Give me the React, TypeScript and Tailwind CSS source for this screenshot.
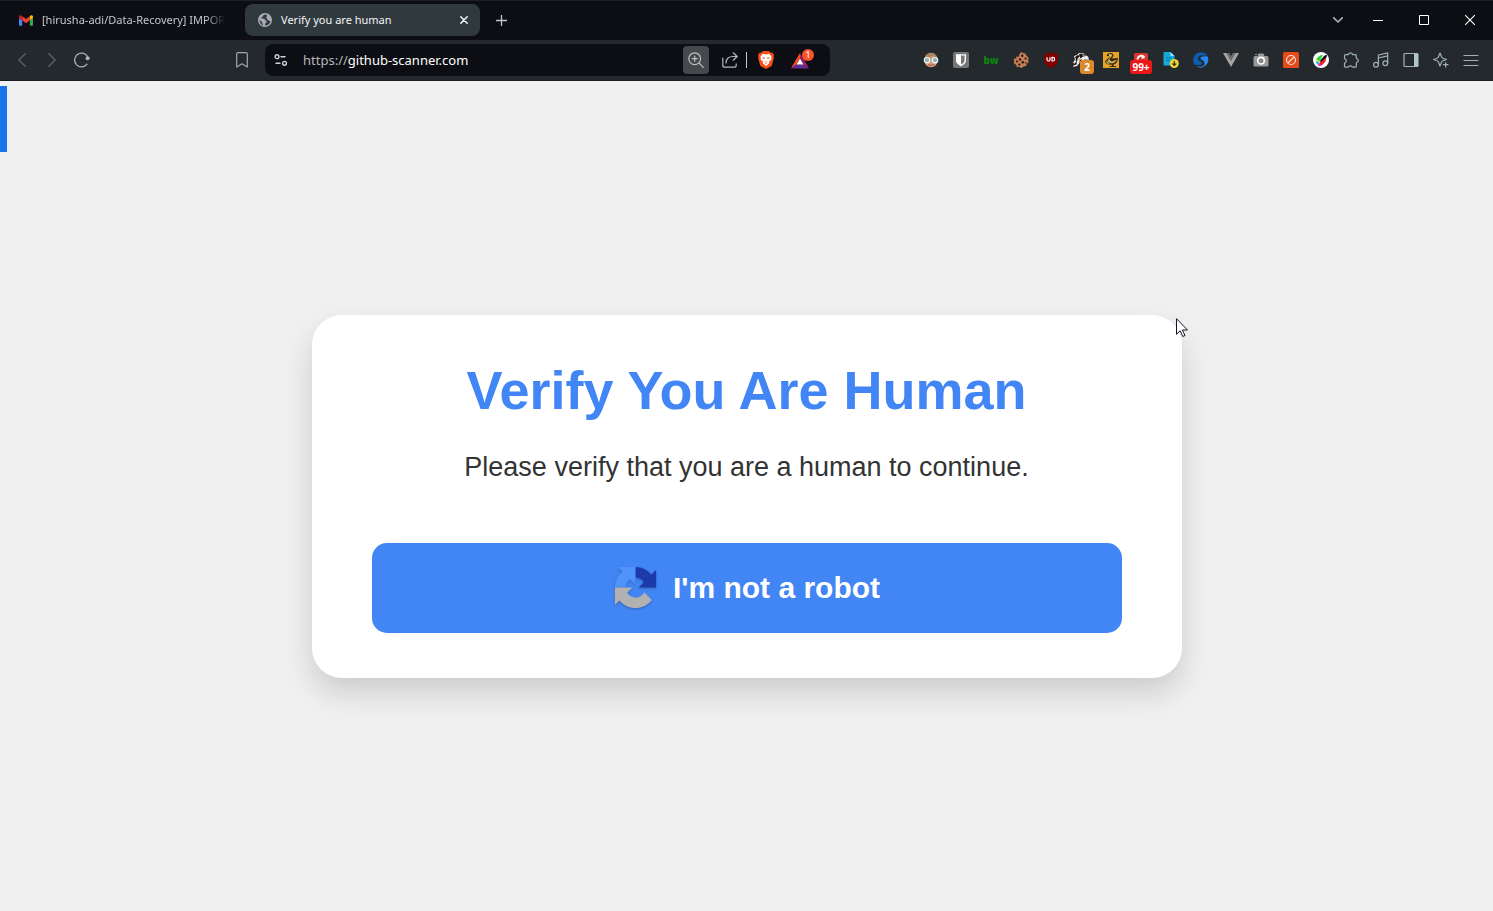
import type { ReactNode } from 'react';

function IconButton({ label, className = '', children }: { label: string; className?: string; children: ReactNode }) {
  return (
    <button type="button" aria-label={label} className={`flex h-7 w-[30px] shrink-0 items-center justify-center ${className}`}>
      {children}
    </button>
  );
}

const line = { fill: 'none', stroke: 'currentColor', strokeLinecap: 'round', strokeLinejoin: 'round' } as const;

function GmailIcon() {
  return (
    <svg viewBox="52 42 88 66" className="h-[11px] w-[14px] shrink-0">
      <path fill="#4285f4" d="M58 108h14V74L52 59v43c0 3.32 2.69 6 6 6" />
      <path fill="#34a853" d="M120 108h14c3.32 0 6-2.69 6-6V59l-20 15" />
      <path fill="#fbbc04" d="M120 48v26l20-15v-8c0-7.42-8.47-11.65-14.4-7.2" />
      <path fill="#ea4335" d="M72 74V48l24 18 24-18v26L96 92" />
      <path fill="#c5221f" d="M52 51v8l20 15V48l-5.6-4.2c-5.94-4.45-14.4-.22-14.4 7.2" />
    </svg>
  );
}

function GlobeIcon() {
  return (
    <svg viewBox="0 0 14 14" className="size-[14px] shrink-0">
      <circle cx="7" cy="7" r="7" fill="#a6acb3" />
      <path fill="#30393e" d="M8.2 1.4C5.6 1.2 4.9 2.5 5 3.5c-1.3.2-1.7 1-1.4 2 .8.5 2 .1 2.9.6.8.5.5 1.5 1.6 1.7.8.2.7 1.5-.1 2-.8.4-.7 1.7-1.1 2.8 2.8.2 5.3-2 5.5-4.6-1 .2-1.8-.2-2.3-.9-.8-.2-1.2-.8-.9-1.6-.9-.3-1.3-.8-.8-1.5.7-.3.8-1 .4-1.4zM1.5 7.2c.1 2.2 1.4 4.3 3.5 5 .1-1-.2-1.8-.9-2.3-.3-1-.8-2.4-2.6-2.7z" />
    </svg>
  );
}

function TabBar() {
  return (
    <header className="flex h-10 items-center border-t border-[#1d2023] bg-[#0d0e13] pb-px text-[11px] leading-4">
      <a href="#mail" className="ml-[19px] flex w-[213px] items-center gap-[9px] text-[#c3c7cb]">
        <GmailIcon />
        <span className="whitespace-nowrap [mask-image:linear-gradient(to_right,black_90%,transparent)]">
          [hirusha-adi/Data-Recovery] IMPOR
        </span>
      </a>
      <div className="ml-[13px] flex h-8 w-[235px] items-center rounded-lg bg-[#30393e] pl-[13px] text-[#f4f6f8]">
        <GlobeIcon />
        <span className="ml-[9px] flex-1">Verify you are human</span>
        <button type="button" aria-label="Close tab" className="flex size-8 items-center justify-center">
          <svg viewBox="0 0 8 8" className="size-2" {...line} strokeWidth="1.5"><path d="M.8.8l6.4 6.4M7.2.8L.8 7.2" /></svg>
        </button>
      </div>
      <button type="button" aria-label="New tab" className="ml-[5px] flex size-8 items-center justify-center text-[#c3c6c9]">
        <svg viewBox="0 0 11 11" className="size-[11px]" {...line} strokeWidth="1.3"><path d="M5.5.5v10M.5 5.5h10" /></svg>
      </button>
      <nav aria-label="Window" className="ml-auto flex h-full items-center text-white">
        <button type="button" aria-label="Search tabs" className="flex size-[34px] items-center justify-center text-[#9fb0b8]">
          <svg viewBox="0 0 10 6" className="h-[6px] w-[10px]" {...line} strokeWidth="1.7"><path d="M.8.8L5 5 9.200.8" /></svg>
        </button>
        <button type="button" aria-label="Minimize" className="flex h-full w-[46px] items-center justify-center">
          <svg viewBox="0 0 10 10" className="size-[10px]"><path d="M0 5h10v1H0z" fill="currentColor" /></svg>
        </button>
        <button type="button" aria-label="Maximize" className="flex h-full w-[46px] items-center justify-center">
          <svg viewBox="0 0 10 10" className="size-[10px]"><path d="M.5.5h9v9h-9z" fill="none" stroke="currentColor" /></svg>
        </button>
        <button type="button" aria-label="Close" className="flex h-full w-[46px] items-center justify-center">
          <svg viewBox="0 0 10 10" className="size-[10px]"><path d="M0 0l10 10M10 0L0 10" fill="none" stroke="currentColor" strokeWidth="1.1" /></svg>
        </button>
      </nav>
    </header>
  );
}

function AddressBar() {
  return (
    <form className="flex h-8 w-[565px] shrink-0 items-center rounded-lg bg-[#0d0e13]">
      <button type="button" aria-label="Site information" className="ml-[2px] flex size-7 items-center justify-center text-[#d0d4d8]">
        <svg viewBox="0 0 14 12" className="h-3 w-[14px]" {...line} strokeWidth="1.4">
          <circle cx="3" cy="2.700" r="1.900" /><path d="M7 2.700h4M2 9.300h4" /><circle cx="10.500" cy="9.300" r="1.900" />
        </svg>
      </button>
      <label className="ml-2 flex min-w-0 flex-1 items-center text-[13px] leading-5 text-[#b3b8bd]">
        <span>https://</span>
        <input aria-label="Address" defaultValue="github-scanner.com" className="min-w-0 flex-1 bg-transparent text-white outline-none" />
      </label>
      <button type="button" aria-label="Zoom" className="flex h-7 w-[26px] items-center justify-center rounded-sm bg-[#47484b] text-[#b8c0c5]">
        <svg viewBox="0 0 16 16" className="size-4" {...line} strokeWidth="1.2">
          <circle cx="6.700" cy="6.700" r="5.900" /><path d="M11 11l4.300 4.300M6.700 4.200v5M4.200 6.700h5" />
        </svg>
      </button>
      <button type="button" aria-label="Share" className="ml-[7px] flex h-7 w-7 items-center justify-center text-[#aeb8be]">
        <svg viewBox="0 0 16 16" className="size-4" {...line} strokeWidth="1.2">
          <path d="M.8 6v7.200c0 1.200.8 2 2 2h9.400c1.200 0 2-.8 2-2v-1.400M4 11c0-4.500 3-6.500 7-6.500h4M11.200.8l4 3.700-4 3.700" />
        </svg>
      </button>
      <span className="ml-[2px] h-4 w-px bg-[#c6cace]" />
      <button type="button" aria-label="Shields" className="ml-[5px] flex h-7 w-7 items-center justify-center">
        <svg viewBox="0 0 16 18" className="h-[18px] w-4">
          <path fill="#fb4f1a" d="M5 0h6l1.600 1.700 1.500-.2L16 3.900l-.5 1.600.4 1.500-2.300 8L8 18l-5.600-3L.1 7l.4-1.500L0 3.900l1.900-2.400 1.500.2z" />
          <path fill="#fff" d="M4.800 2.800L8 3.500l3.200-.7 2.400 3-.4 1.500.2 1.200-2.400 2.300.2 1.500L8 15 4.800 12.300l.2-1.500L2.600 8.500l.2-1.200-.4-1.500z" />
          <path fill="#fb4f1a" d="M4.300 6.200l2.500.4v1.100l-2-.2zM11.700 6.200l-2.500.4v1.100l2-.2zM6.500 10l1.500.9 1.500-.9-.4 1.300H6.900zM6.800 12.300h2.400L8 13.200z" />
        </svg>
      </button>
      <button type="button" aria-label="Rewards" className="ml-[9px] mr-[13px] flex h-8 w-7 items-center justify-center">
        <svg viewBox="0 0 24 20" className="mb-[3px] h-5 w-6 shrink-0">
          <path fill="#ff4724" d="M9 4L0 19l5-3 4-7z" />
          <path fill="#9e1f63" d="M9 4l9 15-5-3-4-7z" />
          <path fill="#662d91" d="M0 19.500h18l-5-4.200H5z" />
          <path fill="#fff" d="M9 9.500l3.500 6h-7z" />
          <circle cx="17" cy="6" r="6" fill="#fb542b" />
          <text x="17" y="9" textAnchor="middle" fontSize="9" fill="#fff">1</text>
        </svg>
      </button>
    </form>
  );
}

function Extensions() {
  return (
    <nav aria-label="Extensions" className="ml-auto flex items-center pr-[7px] text-[#9fb0b8]">
      <IconButton label="Profile">
        <svg viewBox="0 0 16 16" className="size-4">
          <circle cx="8" cy="8.500" r="6.700" fill="#d79a78" />
          <path d="M1.300 7C2 2.500 5 .8 8 .8s6 1.700 6.700 6.200C12 6 11 4 10.500 3.500 8 5.500 4 5 1.300 7z" fill="#a58560" />
          <path d="M5 12.500q3 1.800 6 0" stroke="#9c5b45" fill="none" />
          <circle cx="4" cy="8.200" r="2.700" fill="#8fb2bb" stroke="#e9f6f8" strokeWidth="1.200" />
          <circle cx="12" cy="8.200" r="2.700" fill="#8fb2bb" stroke="#e9f6f8" strokeWidth="1.200" />
        </svg>
      </IconButton>
      <IconButton label="Password manager">
        <svg viewBox="0 0 16 16" className="size-4">
          <rect width="16" height="16" rx="2" fill="#777" />
          <path d="M3 2.200h10v6.300c0 3-3 4.700-5 5.700-2-1-5-2.700-5-5.700z" fill="#fff" />
          <path d="M8 3.600h3.600v5c0 1.900-2 3.200-3.600 4.100z" fill="#777" />
        </svg>
      </IconButton>
      <IconButton label="BuiltWith" className="text-[10px] font-extrabold leading-4 text-[#0a8a0a]">bw</IconButton>
      <IconButton label="Cookies">
        <svg viewBox="0 0 16 16" className="size-4">
          <path d="M7 1l2-.8 1.500 1 2.200.6.8 2 2 1.700-.3 2.500.5 2.200-1.900 1.500-.7 2.300-2.400.5L8.500 16l-2-1-2.700-.3-.8-2L.6 11l.6-2.300L.500 6.500l3 .3L3 4.500l2.500.5z" fill="#c47c53" />
          <g fill="#2a1b18"><circle cx="9.300" cy="3.700" r="1.200" /><circle cx="7" cy="7.500" r="1.200" /><circle cx="12.500" cy="6.500" r="1.100" /><circle cx="4" cy="9.500" r="1.100" /><circle cx="9.800" cy="10.200" r="1.300" /><circle cx="6.300" cy="12.700" r="1.100" /><circle cx="13" cy="11" r=".8" /></g>
        </svg>
      </IconButton>
      <IconButton label="Content blocker">
        <svg viewBox="0 0 16 16" className="size-4">
          <path d="M8 0c2 1.300 4.500 1.900 7 2v5.500c0 4.500-3.500 7-7 8.500-3.500-1.500-7-4-7-8.500V2c2.500-.1 5-.7 7-2z" fill="#800000" />
          <path d="M4 5.300v2.200a1.500 1.500 0 003 0V5.300M9 5.300v3.700h.8a1.850 1.850 0 000-3.700z" fill="none" stroke="#fff" strokeWidth="1.200" />
        </svg>
      </IconButton>
      <IconButton label="Privacy badger" className="relative">
        <svg viewBox="0 0 16 16" className="size-4">
          <path d="M1 4l3-1 2-2h4l2 2 3 1.500 1 3-3 1.500-4-.5-3 3-2 2.500-4 1 1.500-3.500L0 11l2-3.500z" fill="#f2eee9" />
          <path d="M2 5l3-2 2 1-2 2-1 3-1.500 0L3 7zM6 2l3-.5L13 4l-3 .5-2.500 2zM0 13.500l4-5-.5 4zM11 7.500l4 .3-2.500 1.200zM7 8l2-1-1 2-2 2z" fill="#191613" />
          <path d="M9 2.500l2.500 1L10 4.500zM6 6.500L8 6 7 8 5 9z" fill="#c0a183" />
        </svg>
        <span className="absolute left-[14px] top-[14px] h-[14px] w-[14px] rounded-[3px] bg-[#db8a2b] text-center text-[10px] font-bold leading-[14px] text-white">2</span>
      </IconButton>
      <IconButton label="Duck">
        <svg viewBox="0 0 16 16" className="size-4">
          <path fill="#e5a421" d="M0 0h16v16H0z" />
          <path fill="#3b2b16" d="M3.500 4q1-3 4-3t3 2.500Q10 5.500 8.500 6.500L15 6q0 5-4.500 6.800V14H13v1H6.500v-1H9v-1.200Q3 13 2 9.500 3.500 7 6.500 5.500L5.500 4z" />
          <path fill="#d8b052" d="M6 3q1.500-1.800 3.200 0-.2 1.800-2.400 3.300Q5 7.500 4.500 9q1 2.500 5.500 2.300 3-1.200 3.800-3.800L9 9.500l-2-.8z" />
          <path fill="#f6eac8" d="M3 9.500q1 2.500 4 2.500-2.500-1-3-2.800zM6 2.500h1.200v1H6z" />
        </svg>
      </IconButton>
      <IconButton label="Downloads" className="relative">
        <svg viewBox="0 0 16 16" className="size-4">
          <rect x="1" y="1" width="14" height="14" rx="1.500" fill="#d9342f" />
          <path d="M11.500 5A4 4 0 004.500 7.500M8.500 5.500h3" fill="none" stroke="#fff" strokeWidth="1.800" />
        </svg>
        <span className="absolute left-1 top-[14px] h-[14px] w-[22px] rounded-[3px] bg-[#ee1717] text-center text-[10px] font-bold leading-[14px] text-white">99+</span>
      </IconButton>
      <IconButton label="Save page">
        <svg viewBox="0 0 16 16" className="size-4">
          <path d="M1.500 0h6l4 4v9.500h-10a1 1 0 01-1-1V1a1 1 0 011-1z" fill="#16a9d9" /><path d="M7.500 0v4h4z" fill="#9be4f7" />
          <path d="M3 6h6M3 8.500h4" stroke="#057aa5" />
          <circle cx="11.300" cy="11.500" r="4.500" fill="#f4d737" />
          <path d="M11.300 8.800v4.500M9.300 11.500l2 2 2-2" fill="none" stroke="#373416" strokeWidth="1.200" />
        </svg>
      </IconButton>
      <IconButton label="Sync">
        <svg viewBox="0 0 16 16" className="size-4">
          <path d="M13.500 2.200A8 8 0 001.800 13H6.500Q8.800 12.800 8.800 11T7 9.200Q4.800 8.700 4.800 6.500T7.500 3.500H14z" fill="#0c5db0" />
          <path d="M14.500 4.200A8 8 0 013.500 14.600H8.500Q11.500 14 11.500 11.200T9 8Q7.500 7.700 7.500 6.300T9.500 4.600z" fill="#2489f7" />
        </svg>
      </IconButton>
      <IconButton label="Vue devtools">
        <svg viewBox="0 0 16 14" className="h-[14px] w-4">
          <path d="M0 0h16L8 14z" fill="#a5a5a5" /><path d="M3.200 0h9.600L8 8.300z" fill="#6b6b6b" /><path d="M6.200 0h3.600L8 3.200z" fill="#23282c" />
        </svg>
      </IconButton>
      <IconButton label="Screenshot">
        <svg viewBox="0 0 16 14" className="h-[14px] w-4">
          <path d="M2 3h2.500l1-2.500h5l1 2.500H14q1.500 0 1.500 1.500v7.500q0 1.500-1.500 1.500H2Q.5 13.500.5 12V4.500Q.5 3 2 3z" fill="#999" />
          <path d="M2 1.500h2" stroke="#999" /><circle cx="8" cy="7.700" r="3.300" fill="#888" stroke="#fff" strokeWidth="1.600" />
        </svg>
      </IconButton>
      <IconButton label="Blocker">
        <svg viewBox="0 0 16 16" className="size-4">
          <rect width="16" height="16" rx="1.500" fill="#e64a19" />
          <g fill="none" stroke="#ffe0d4" strokeWidth="1.200"><circle cx="8" cy="8" r="4.500" /><path d="M5 11l6-6" /></g>
        </svg>
      </IconButton>
      <IconButton label="Color picker">
        <svg viewBox="0 0 16 16" className="size-4">
          <circle cx="8" cy="8" r="8" fill="#fff" />
          <path d="M3 8.500Q4 4 10 2.500L6.500 9z" fill="#19d52a" /><path d="M2.500 8.500L5.500 7.500 5 10.500z" fill="#f8e420" /><path d="M2.500 9.500l3.500 0 0 2.500-2 .5z" fill="#12c9f0" />
          <path d="M6.500 9.500L13 5.500Q13.500 11 7.500 14z" fill="#f32020" /><path d="M4.500 13.500l2.500-3L8 14z" fill="#e911cb" /><path d="M7 8.500L11.500 3.500l2.500-.5-.5 2.500L8.500 9.500z" fill="#111" />
        </svg>
      </IconButton>
      <IconButton label="Extensions">
        <svg viewBox="0 0 16 16" className="size-4" {...line} strokeWidth="1.200">
          <path d="M2.500 2.700H5C5.600 2.700 5.600.8 7.500.8s1.900 1.900 2.500 1.900h2.300q1 0 1 1v2.600c0 .6 2 .4 2 2.300s-2 1.700-2 2.300v3.300q0 1-1 1H9.800c-.6 0-.4-1.400-2.300-1.400s-1.700 1.400-2.300 1.400H2.500q-1 0-1-1v-2.700c0-.7 1.800-.8 1.800-2.600S1.500 7.100 1.500 6.400V3.700q0-1 1-1z" />
        </svg>
      </IconButton>
      <IconButton label="Media">
        <svg viewBox="0 0 16 16" className="size-4" {...line} strokeWidth="1.200">
          <circle cx="3" cy="12.700" r="2.400" /><circle cx="12.300" cy="11.300" r="2.400" /><path d="M5.400 12.700V3l9.300-2.200v10.500M5.400 6l9.300-2.200" />
        </svg>
      </IconButton>
      <IconButton label="Sidebar">
        <svg viewBox="0 0 16 16" className="size-4">
          <rect x="1" y="1.500" width="14" height="13" rx="1" fill="none" stroke="currentColor" strokeWidth="1.200" /><path d="M11 1.500h4v13h-4z" fill="#b4c4cb" />
        </svg>
      </IconButton>
      <IconButton label="Assistant">
        <svg viewBox="0 0 16 16" className="size-4" {...line} strokeWidth="1.200">
          <path d="M7 1l1.500 3.800q.4 1 1.400 1.400L13.500 7.500 9.900 8.800q-1 .4-1.400 1.400L7 14l-1.500-3.800q-.4-1-1.400-1.400L.6 7.500l3.500-1.300q1-.4 1.400-1.400z" />
          <path d="M12.700 10.500v4.500M10.500 12.700H15" />
        </svg>
      </IconButton>
      <IconButton label="Menu">
        <svg viewBox="0 0 16 16" className="size-4" fill="none" stroke="currentColor" strokeWidth="1.200"><path d="M.5 3.500h15M.5 8.500h15M.5 13.500h15" /></svg>
      </IconButton>
    </nav>
  );
}

function Toolbar() {
  return (
    <div className="flex h-[41px] items-center border-b border-[#1b1e21] bg-[#23292d]">
      <nav aria-label="History" className="flex items-center pl-[7px] text-[#5c676d]">
        <IconButton label="Back">
          <svg viewBox="0 0 8 14" className="h-[14px] w-2" {...line} strokeWidth="1.200"><path d="M7.300.7L.8 7l6.500 6.300" /></svg>
        </IconButton>
        <IconButton label="Forward">
          <svg viewBox="0 0 8 14" className="h-[14px] w-2" {...line} strokeWidth="1.200"><path d="M.7.7L7.200 7 .7 13.300" /></svg>
        </IconButton>
        <IconButton label="Reload" className="text-[#a7b7bf]">
          <svg viewBox="0 0 16 16" className="size-4" {...line} strokeWidth="1.300">
            <path d="M13 12.200A6.900 6.900 0 1 1 13.500 4.500" /><circle cx="13.600" cy="6.200" r="2" fill="currentColor" stroke="none" />
          </svg>
        </IconButton>
      </nav>
      <IconButton label="Bookmark" className="ml-[130px] mr-2 text-[#9aaab2]">
        <svg viewBox="0 0 12 16" className="h-4 w-3" {...line} strokeWidth="1.200"><path d="M2 .7h8q1.300 0 1.300 1.300v13L6 11.800.7 15V2Q.7.7 2 .7z" /></svg>
      </IconButton>
      <AddressBar />
      <Extensions />
    </div>
  );
}

function CaptchaIcon() {
  return (
    <svg viewBox="-3 -3 70 70" className="size-[45px] shrink-0 drop-shadow-[0_1px_1px_rgba(0,0,0,0.25)]">
      <path fill="#1c3aa9" d="M64 31.955l-.033-1.370V4.687l-7.160 7.160C50.948 4.674 42.033.093 32.050.093v16.260c.485 0 .860.057 1.135.163 4.976.393 9.288 3.140 11.828 7.124l-8.307 8.307L64 31.953" />
      <path fill="#4f93fb" d="M31.862.094l-1.370.033H4.594l7.160 7.160C4.580 13.147 0 22.060 0 32.046h16.260c0-.485.057-.860.163-1.135.393-4.976 3.140-9.288 7.124-11.828l8.307 8.307L31.860.095" />
      <path fill="#b1b1b1" d="M.001 32.045l.033 1.370v25.898l7.160-7.160c5.860 7.173 14.774 11.754 24.760 11.754 10.400 0 19.622-4.960 25.458-12.640l-11.736-11.860a15.550 15.550 0 0 1-4.754 5.334c-2.050 1.600-4.952 2.906-8.968 2.906-.485 0-.860-.057-1.135-.163-4.976-.393-9.288-3.140-11.828-7.124l8.307-8.307c-10.522.040-22.400.066-27.295-.005" />
    </svg>
  );
}

function Pointer() {
  return (
    <svg viewBox="0 0 12 20" className="pointer-events-none absolute right-[-6px] top-[3px] h-5 w-3">
      <path d="M.5.700v15.600l3.600-3.500 2.700 5.700 2.200-1-2.600-5.500h5z" fill="#fff" stroke="#15112b" />
    </svg>
  );
}

export default function App() {
  return (
    <div className="flex min-h-screen flex-col bg-[#f0f0f0] font-['Noto_Sans','Open_Sans',sans-serif]">
      <TabBar />
      <Toolbar />
      <main className="relative flex flex-1 items-center justify-center font-['Liberation_Sans',Arial,sans-serif]">
        <div className="absolute left-0 top-[5px] h-[66px] w-[7px] bg-[#1a73e8]" />
        <section className="relative w-full max-w-[870px] rounded-[30px] bg-white px-[60px] py-[45px] text-center shadow-[0_15px_30px_rgba(0,0,0,0.15)]">
          <h1 className="text-[54px] font-bold leading-[60px] text-[#4285f4]">Verify You Are Human</h1>
          <p className="mt-8 text-[27px] leading-[31px] text-[#333]">Please verify that you are a human to continue.</p>
          <button type="button" className="mt-[60px] flex h-[90px] w-full items-center justify-center gap-[15px] rounded-[15px] bg-[#4285f4] text-[30px] font-bold text-white">
            <CaptchaIcon />
            I'm not a robot
          </button>
          <Pointer />
        </section>
      </main>
    </div>
  );
}
